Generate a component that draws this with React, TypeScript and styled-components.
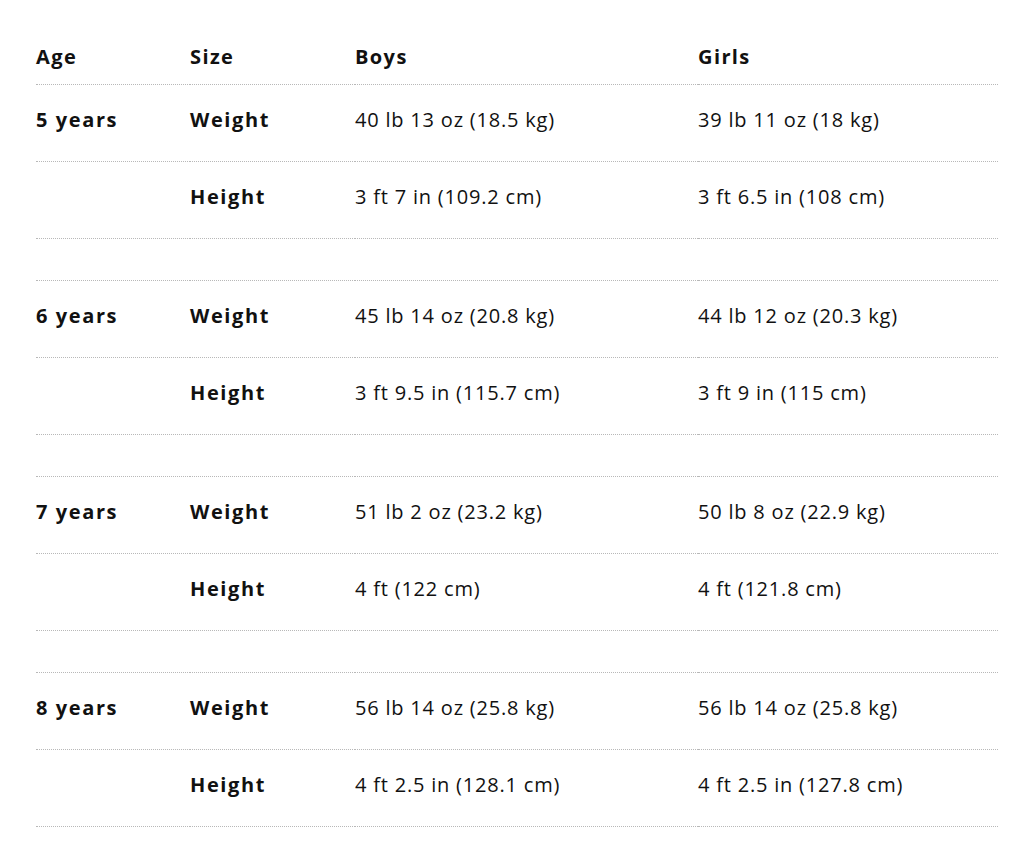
import React from "react";
import styled, { createGlobalStyle } from "styled-components";

const Global = createGlobalStyle`
  html, body { margin: 0; padding: 0; background: #fff; }
  body { font-family: "Open Sans", "Noto Sans", Arial, sans-serif; color: #111; }
`;

const Page = styled.div`
  padding: 30px 18px 0 36px;
`;

const Table = styled.table`
  width: 962px;
  border-collapse: collapse;
  table-layout: fixed;
  font-size: 20px;
`;

const HeadCell = styled.th<{ $w: number }>`
  width: ${(p) => p.$w}px;
  height: 52px;
  padding: 0 0 2px 0;
  text-align: left;
  font-weight: 700;
  letter-spacing: 1.4px;
  vertical-align: middle;
  border-bottom: 1px dotted #b8b8b8;
`;

const Cell = styled.td<{ $bold?: boolean }>`
  height: 69px;
  padding: 0 0 7px 0;
  font-weight: ${(p) => (p.$bold ? 700 : 400)};
  letter-spacing: ${(p) => (p.$bold ? "1.6px" : "0.8px")};
  vertical-align: middle;
  border-bottom: 1px dotted #b8b8b8;
  white-space: nowrap;
`;

const SpacerCell = styled.td`
  height: 41px;
  padding: 0;
  border-bottom: 1px dotted #b8b8b8;
`;

const data = [
  { age: "5 years", bw: "40 lb 13 oz (18.5 kg)", gw: "39 lb 11 oz (18 kg)", bh: "3 ft 7 in (109.2 cm)", gh: "3 ft 6.5 in (108 cm)" },
  { age: "6 years", bw: "45 lb 14 oz (20.8 kg)", gw: "44 lb 12 oz (20.3 kg)", bh: "3 ft 9.5 in (115.7 cm)", gh: "3 ft 9 in (115 cm)" },
  { age: "7 years", bw: "51 lb 2 oz (23.2 kg)", gw: "50 lb 8 oz (22.9 kg)", bh: "4 ft (122 cm)", gh: "4 ft (121.8 cm)" },
  { age: "8 years", bw: "56 lb 14 oz (25.8 kg)", gw: "56 lb 14 oz (25.8 kg)", bh: "4 ft 2.5 in (128.1 cm)", gh: "4 ft 2.5 in (127.8 cm)" },
];

export default function App() {
  return (
    <Page>
      <Global />
      <Table>
        <thead>
          <tr>
            <HeadCell $w={154}>Age</HeadCell>
            <HeadCell $w={165}>Size</HeadCell>
            <HeadCell $w={343}>Boys</HeadCell>
            <HeadCell $w={300}>Girls</HeadCell>
          </tr>
        </thead>
        <tbody>
          {data.map((d, i) => (
            <React.Fragment key={d.age}>
              <tr>
                <Cell $bold>{d.age}</Cell>
                <Cell $bold>Weight</Cell>
                <Cell>{d.bw}</Cell>
                <Cell>{d.gw}</Cell>
              </tr>
              <tr>
                <Cell />
                <Cell $bold>Height</Cell>
                <Cell>{d.bh}</Cell>
                <Cell>{d.gh}</Cell>
              </tr>
              {i < data.length - 1 && (
                <tr>
                  <SpacerCell colSpan={4} />
                </tr>
              )}
            </React.Fragment>
          ))}
        </tbody>
      </Table>
    </Page>
  );
}
